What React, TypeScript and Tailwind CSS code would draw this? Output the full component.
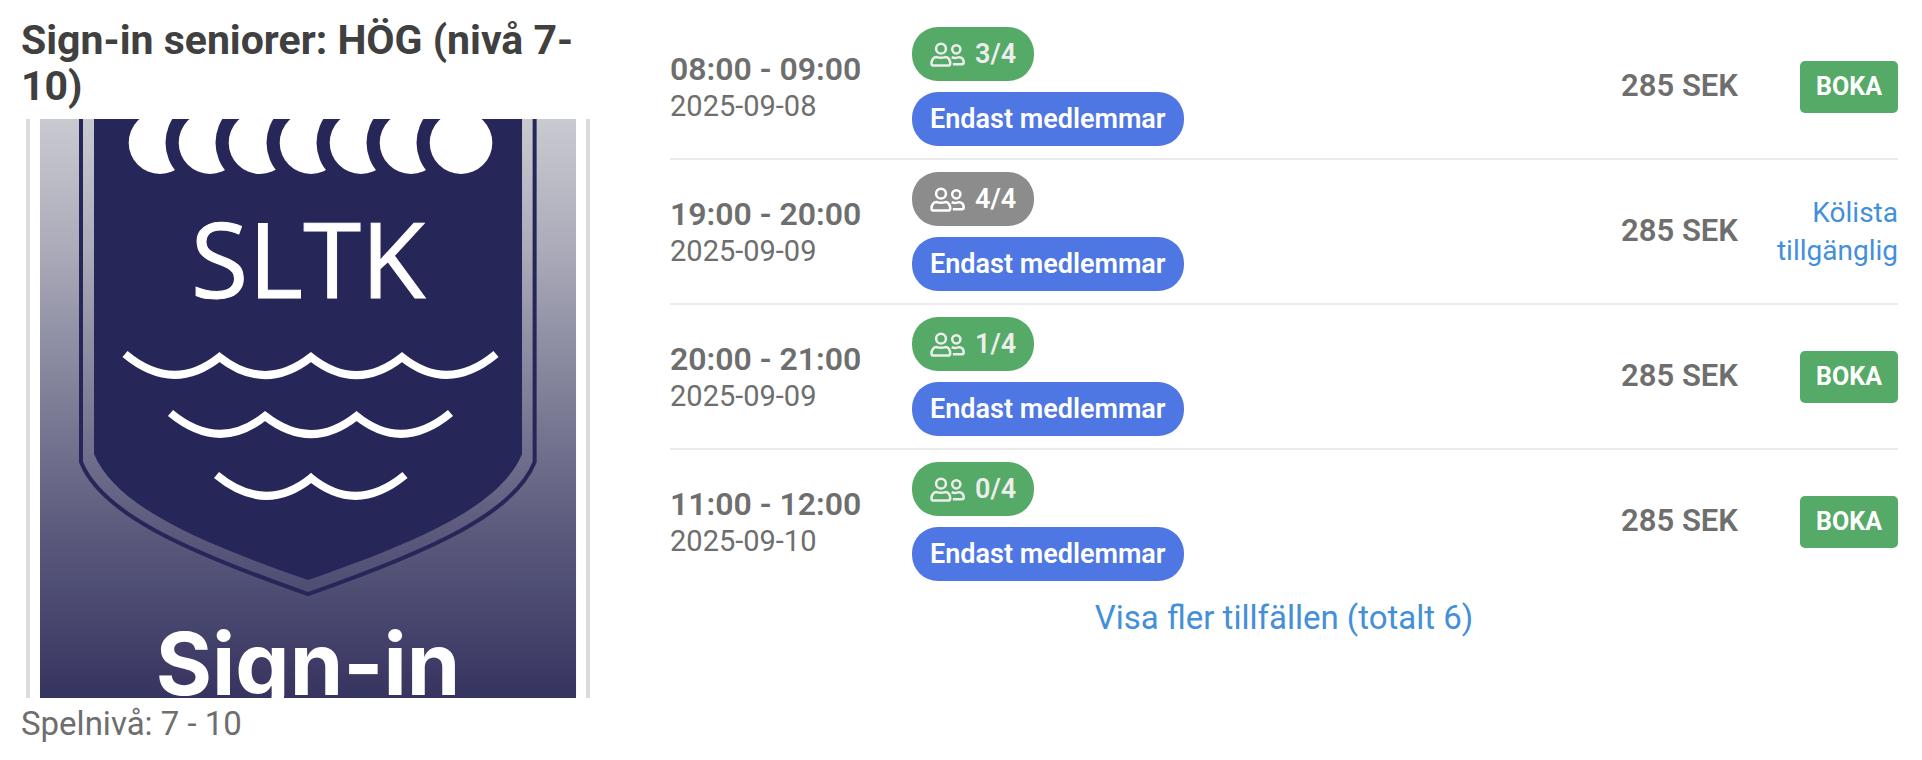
type Slot = {
  time: string;
  date: string;
  booked: number;
  price: string;
};

const CAPACITY = 4;

const slots: Slot[] = [
  { time: '08:00 - 09:00', date: '2025-09-08', booked: 3, price: '285 SEK' },
  { time: '19:00 - 20:00', date: '2025-09-09', booked: 4, price: '285 SEK' },
  { time: '20:00 - 21:00', date: '2025-09-09', booked: 1, price: '285 SEK' },
  { time: '11:00 - 12:00', date: '2025-09-10', booked: 0, price: '285 SEK' },
];

const discs = [160, 210, 260, 311, 361, 411, 461];

function PeopleIcon() {
  return (
    <svg width="35" height="25" viewBox="0 0 35 25" fill="none" stroke="currentColor" strokeWidth="2.5" aria-hidden="true">
      <circle cx="11" cy="6.7" r="4.9" />
      <path d="M6.8 15.1 Q11 16.3 15.2 15.1 C18.6 15 20.2 18 20.2 21.4 Q20.2 23.6 18 23.6 H3.8 Q1.5 23.6 1.5 21.4 C1.5 18 3.4 15 6.8 15.1 Z" />
      <circle cx="26.3" cy="7.3" r="4.1" />
      <path d="M21.6 15.3 C24 16 27 16 29 15.2 C32 15 33.7 17.5 33.7 20.2 Q33.7 22.2 32 22.2 H22.8" />
    </svg>
  );
}

function ClubPoster() {
  return (
    <svg viewBox="21 119 573 579" className="block w-full" role="img" aria-label="SLTK Sign-in">
      <defs>
        <linearGradient id="sky" x1="0" y1="0" x2="0" y2="1">
          <stop offset="0" stopColor="#c9cad0" />
          <stop offset="0.22" stopColor="#acacba" />
          <stop offset="0.45" stopColor="#84849c" />
          <stop offset="0.72" stopColor="#5a597c" />
          <stop offset="1" stopColor="#363460" />
        </linearGradient>
      </defs>
      <rect x="26" y="119" width="4" height="579" fill="#dcdcdc" />
      <rect x="586" y="119" width="4" height="579" fill="#dcdcdc" />
      <rect x="40" y="119" width="536" height="579" fill="url(#sky)" />

      {/* shield */}
      <path d="M81 100 V462 C101 512 180 549 308 594 C436 549 515 512 534.6 462 V100" fill="none" stroke="#272658" strokeWidth="4" />
      <path d="M94 100 V454 C115 504 190 539 308 580 C426 539 501 504 522 454 V100 Z" fill="#272658" />

      {/* row of overlapping balls */}
      {discs.map((cx) => (
        <g key={cx}>
          <circle cx={cx} cy="142.7" r="44.5" fill="#272658" />
          <circle cx={cx} cy="142.7" r="31.3" fill="#fff" />
        </g>
      ))}

      <text x="308" y="298" textAnchor="middle" fontSize="105" fill="#fff" stroke="#fff" strokeWidth="1" fontFamily="Open Sans, sans-serif">
        SLTK
      </text>

      {/* waves */}
      <g fill="none" stroke="#fff" strokeWidth="8">
        <path d="M125 354 Q173 394 219.5 357 Q265 393 311 357 Q356.5 393 402 357 Q448 394 496 354" />
        <path d="M170.5 413 Q219 453 265 416 Q311 452 356.5 416 Q402 453 450.5 413" />
        <path d="M216.5 475 Q265 515 311 478 Q356.5 515 405 475" />
      </g>

      <text x="308" y="695" textAnchor="middle" fontSize="86" fontWeight="700" fill="#fff" fontFamily="Inter, sans-serif">
        Sign-in
      </text>
    </svg>
  );
}

function SlotRow({ slot }: { slot: Slot }) {
  const full = slot.booked >= CAPACITY;

  return (
    <li className="flex items-center border-b-2 border-[#ebebeb] py-3 last:border-b-0">
      <div className="w-[242px] shrink-0">
        <p className="text-[32px] leading-[38px] font-semibold">{slot.time}</p>
        <p className="text-[29px] leading-9">{slot.date}</p>
      </div>

      <div className="flex flex-1 flex-col items-start gap-[11px] text-[27px] font-semibold">
        <span
          className={
            full
              ? 'flex h-[54px] items-center gap-[10px] rounded-[26px] bg-[#8c8c8c] px-[18px] text-white'
              : 'flex h-[54px] items-center gap-[10px] rounded-[26px] bg-[#54aa66] px-[18px] text-[#ededed]'
          }
        >
          <PeopleIcon />
          {slot.booked}/{CAPACITY}
        </span>
        <span className="flex h-[54px] items-center rounded-[26px] bg-[#4e77e3] px-[18px] text-white">
          Endast medlemmar
        </span>
      </div>

      <p className="text-[31px] font-semibold">{slot.price}</p>

      <div className="flex w-[160px] shrink-0 justify-end pl-[36px] text-right">
        {full ? (
          <a href="#kolista" className="text-[28px] leading-[38px] text-[#438fd9]">
            Kölista tillgänglig
          </a>
        ) : (
          <button type="button" className="h-[52px] rounded-[5px] bg-[#54aa66] px-4 text-[25px] font-bold text-white">
            BOKA
          </button>
        )}
      </div>
    </li>
  );
}

export default function App() {
  return (
    <main className="grid grid-cols-[7fr_15fr] gap-x-[76px] bg-white pr-6 pl-[21px] font-[Roboto,sans-serif] text-[#6e6e6e]">
      <section className="pt-[17px]">
        <h1 className="mb-[10px] text-[41px] leading-[46px] font-bold text-[#404040]">
          Sign-in seniorer: HÖG (nivå 7-10)
        </h1>
        <ClubPoster />
        <p className="text-[33px] leading-[52px]">Spelnivå: 7 - 10</p>
      </section>

      <section className="pt-[15px]">
        <ul>
          {slots.map((slot) => (
            <SlotRow key={slot.date + slot.time} slot={slot} />
          ))}
        </ul>
        <div className="text-center">
          <a href="#fler" className="text-[33px] leading-[50px] text-[#438fd9]">
            Visa fler tillfällen (totalt 6)
          </a>
        </div>
      </section>
    </main>
  );
}
